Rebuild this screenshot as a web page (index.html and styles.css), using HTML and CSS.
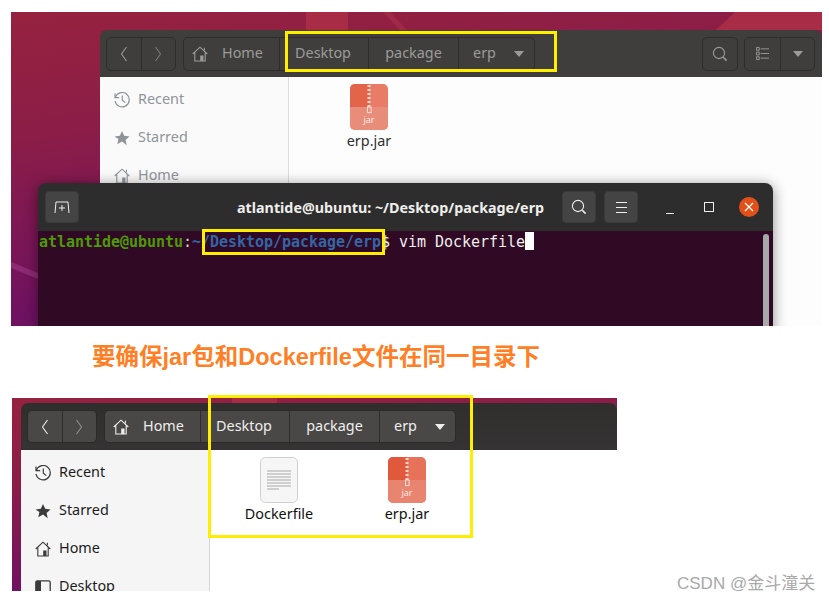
FILE: index.html
```html
<!DOCTYPE html>
<html lang="zh">
<head>
<meta charset="utf-8">
<title>Dockerfile</title>
<link rel="stylesheet" href="styles.css">
</head>
<body>
<svg class="defs" width="0" height="0" aria-hidden="true">
  <symbol id="i-home" viewBox="0 0 16 16"><path d="M.7 8 8 1.2 15.3 8M2.8 6.6V15h10.4V6.6" fill="none" stroke="currentColor" stroke-width="1.1"/><path d="M8.2 9.5h3.3V15H8.2z" fill="currentColor"/><path d="M12.4 1.8v2.6" stroke="currentColor" stroke-width="1.1"/></symbol>
  <symbol id="i-back" viewBox="0 0 16 16"><path d="M10.5 1 5.5 8l5 7" fill="none" stroke="currentColor" stroke-width="1.1"/></symbol>
  <symbol id="i-next" viewBox="0 0 16 16"><path d="m5.5 1 5 7-5 7" fill="none" stroke="currentColor" stroke-width="1.1"/></symbol>
  <symbol id="i-search" viewBox="0 0 16 16"><circle cx="7" cy="7" r="5.6" fill="none" stroke="currentColor" stroke-width="1.1"/><path d="m11 11 3.6 3.6" stroke="currentColor" stroke-width="1.6"/></symbol>
  <symbol id="i-list" viewBox="0 0 14 14"><path d="M5 2h9M5 7h9M5 12h9" stroke="currentColor"/><path d="M.5 .5h3v3h-3zM.5 5.5h3v3h-3zM.5 10.5h3v3h-3z" fill="none" stroke="currentColor"/></symbol>
  <symbol id="i-clock" viewBox="0 0 16 16"><path d="M1.2 5.6A7.2 7.2 0 1 1 1 9" fill="none" stroke="currentColor" stroke-width="1.2"/><path d="M1 1.5v4.2h4.2" fill="none" stroke="currentColor" stroke-width="1.2" stroke-dasharray="0"/><path d="M8.3 3.6v4.6l3 2.4" fill="none" stroke="currentColor" stroke-width="1.2"/></symbol>
  <symbol id="i-star" viewBox="0 0 16 16"><path d="m8 .9 2.2 4.9 5.3.6-3.9 3.6 1.1 5.3L8 11.6l-4.7 2.7 1.1-5.3L.5 6.4l5.3-.6z" fill="currentColor"/></symbol>
  <symbol id="i-desk" viewBox="0 0 16 16"><rect x=".8" y="1.8" width="14.4" height="13" rx="1.5" fill="none" stroke="currentColor" stroke-width="1.3"/><path d="M1 2h5v13H1z" fill="currentColor"/></symbol>
  <symbol id="i-jar" viewBox="0 0 38 46">
    <rect width="38" height="46" rx="5" fill="#e7725a"/>
    <path d="M5 0h14v23H0V5a5 5 0 0 1 5-5z" fill="#e0593c"/>
    <path d="M0 23h38v18a5 5 0 0 1-5 5H5a5 5 0 0 1-5-5z" fill="#e88470"/>
    <path d="M19 1v22" stroke="#f6d5cc" stroke-width="3" stroke-dasharray="2 2"/>
    <rect x="17.5" y="23" width="3.6" height="5.6" fill="none" stroke="#f8ded7"/>
    <text x="19" y="39" class="jar-label">jar</text>
  </symbol>
  <symbol id="i-doc" viewBox="0 0 38 46">
    <rect x=".5" y=".5" width="37" height="45" rx="5" fill="#f6f6f6" stroke="#cfcfcf"/>
    <path d="M7 14h24M7 17h24M7 20h24M7 23h24M7 26h24M7 29h24M7 32h12" stroke="#a8a8a8"/>
  </symbol>
</svg>

<main class="page">
  <section class="shot shot-top">
    <span class="glow glow-a"></span>
    <span class="glow glow-b"></span>
    <span class="glow glow-c"></span>
    <span class="glow glow-d"></span>

    <div class="files files-dim win-top">
      <header class="files-bar">
        <div class="group nav"><button class="seg"><svg class="ico"><use href="#i-back"/></svg></button><button class="seg seg-off"><svg class="ico"><use href="#i-next"/></svg></button></div>
        <div class="group path">
          <span class="seg seg-home"><svg class="ico"><use href="#i-home"/></svg><span>Home</span></span>
          <span class="seg seg-desktop">Desktop</span>
          <span class="seg seg-package">package</span>
          <span class="seg seg-erp">erp<i class="caret"></i></span>
        </div>
        <div class="group tool-search"><span class="seg"><svg class="ico"><use href="#i-search"/></svg></span></div>
        <div class="group tool-view"><span class="seg seg-list"><svg class="ico-s"><use href="#i-list"/></svg></span><span class="seg seg-drop"><i class="caret"></i></span></div>
      </header>
      <div class="files-body">
        <nav class="side">
          <a class="side-item"><svg class="ico"><use href="#i-clock"/></svg>Recent</a>
          <a class="side-item"><svg class="ico"><use href="#i-star"/></svg>Starred</a>
          <a class="side-item"><svg class="ico"><use href="#i-home"/></svg>Home</a>
        </nav>
        <div class="grid">
          <figure class="file file-solo"><svg class="file-ico file-ico-dim"><use href="#i-jar"/></svg><figcaption>erp.jar</figcaption></figure>
        </div>
      </div>
    </div>

    <div class="term">
      <header class="term-bar">
        <span class="tbtn tbtn-new"><svg class="ico" viewBox="0 0 16 14"><path d="M1 13 2 2h12l1 11" fill="none" stroke="currentColor"/><path d="M8 5v6M5 8h6" stroke="currentColor"/></svg></span>
        <span class="term-title">atlantide@ubuntu: ~/Desktop/package/erp</span>
        <span class="tbtn"><svg class="ico"><use href="#i-search"/></svg></span>
        <span class="tbtn tbtn-menu"><i></i><i></i><i></i></span>
        <span class="wbtn wbtn-min"><i></i></span>
        <span class="wbtn wbtn-max"><i></i></span>
        <span class="wbtn wbtn-close"><svg viewBox="0 0 10 10"><path d="m1 1 8 8M9 1 1 9" stroke="#fff" stroke-width="1.2"/></svg></span>
      </header>
      <div class="term-body">
        <div class="term-line"><span class="p-user">atlantide@ubuntu</span><span class="p-colon">:</span><span class="p-path">~/Desktop/package/erp</span><span class="p-cmd">$ vim Dockerfile</span><span class="cursor"></span></div>
        <span class="scroll"></span>
      </div>
    </div>

    <span class="mark mark-path"></span>
    <span class="mark mark-term"></span>
  </section>

  <h1 class="note">要确保jar包和Dockerfile文件在同一目录下</h1>

  <section class="shot shot-bottom">
    <span class="glow glow-e"></span>
    <div class="files files-live win-bottom">
      <header class="files-bar">
        <div class="group nav"><button class="seg"><svg class="ico"><use href="#i-back"/></svg></button><button class="seg seg-off"><svg class="ico"><use href="#i-next"/></svg></button></div>
        <div class="group path">
          <span class="seg seg-home"><svg class="ico"><use href="#i-home"/></svg><span>Home</span></span>
          <span class="seg seg-desktop">Desktop</span>
          <span class="seg seg-package">package</span>
          <span class="seg seg-erp">erp<i class="caret"></i></span>
        </div>
      </header>
      <div class="files-body">
        <nav class="side">
          <a class="side-item"><svg class="ico"><use href="#i-clock"/></svg>Recent</a>
          <a class="side-item"><svg class="ico"><use href="#i-star"/></svg>Starred</a>
          <a class="side-item"><svg class="ico"><use href="#i-home"/></svg>Home</a>
          <a class="side-item"><svg class="ico"><use href="#i-desk"/></svg>Desktop</a>
        </nav>
        <div class="grid">
          <figure class="file file-doc"><svg class="file-ico"><use href="#i-doc"/></svg><figcaption>Dockerfile</figcaption></figure>
          <figure class="file file-jar"><svg class="file-ico"><use href="#i-jar"/></svg><figcaption>erp.jar</figcaption></figure>
        </div>
      </div>
    </div>
  </section>
  <span class="mark mark-bottom"></span>
  <span class="watermark">CSDN @金斗潼关</span>
</main>
</body>
</html>
```

FILE: styles.css
```css
* { box-sizing: border-box; }
html, body { margin: 0; padding: 0; background: #fff; }
body { width: 829px; height: 602px; overflow: hidden; font-family: "Noto Sans", "Noto Sans CJK SC", sans-serif; }
.defs { position: absolute; }
.page { position: relative; width: 829px; height: 602px; padding-top: 12px; }

/* desktop canvases */
.shot { position: relative; overflow: hidden; background: linear-gradient(172deg, #96223f 0%, #8b1d47 30%, #701261 70%, #5c1066 100%); }
.shot-top { margin-left: 11px; width: 811px; height: 314px; }
.shot-bottom { margin-left: 12px; width: 605px; height: 193px; margin-top: 25px; }
.glow { position: absolute; background: #a92c47; }
.glow-a { left: 295px; top: 0; width: 42px; height: 18px; }
.glow-b { left: 372px; top: 0; width: 24px; height: 18px; background: #a02a45; clip-path: polygon(0 0, 30% 0, 100% 100%, 70% 100%); }
.glow-c { left: 705px; top: 0; width: 106px; height: 18px; clip-path: polygon(18% 0, 100% 0, 100% 100%, 0 100%); }
.glow-d { left: 0; top: 250px; width: 27px; height: 17px; background: #8d2a73; clip-path: polygon(0 0, 100% 65%, 100% 100%, 0 35%); }
.glow-e { left: 220px; top: 0; width: 45px; height: 5px; }

/* files window */
.files { position: absolute; display: flex; flex-direction: column; border-radius: 7px 7px 0 0; overflow: hidden; }
.win-top { left: 89px; top: 18px; width: 722px; height: 296px; }
.win-bottom { left: 9px; top: 5px; width: 596px; height: 188px; }
.files-bar { flex: 0 0 47px; display: flex; align-items: center; padding: 0 6px 0 6px; }
.files-dim .files-bar { background: #3f3e3c; color: #9b9b99; }
.files-live .files-bar { background: linear-gradient(#302e2d, #353333); color: #eeeeec; }
.group { height: 34px; display: flex; border: 1px solid #2e2d2c; border-radius: 5px; }
.files-live .group { height: 33px; background: #4a4846; border-color: #2b2a29; }
.seg { display: flex; align-items: center; justify-content: center; height: 100%; padding: 0 0 3px; border: 0; background: none; color: inherit; font: inherit; font-size: 14.4px; border-left: 1px solid #2e2d2c; }
.seg:first-child { border-left: 0; }
.nav { width: 70px; margin-right: 7px; }
.nav .seg { flex: 1; padding-bottom: 0; }
.seg-off { color: #7b7a78; }
.files-live .seg-off { color: #8f8e8c; }
.path { width: 352px; }
.seg-home { width: 95px; justify-content: flex-start; gap: 14px; padding-left: 8px; }
.seg-home .ico { margin-top: 3px; }
.seg-desktop { width: 89px; padding-right: 2px; }
.seg-package { width: 90px; }
.seg-erp { flex: 1; gap: 18px; padding-left: 4px; }
.caret { width: 0; height: 0; margin-top: 3px; border: 5.5px solid transparent; border-top: 6px solid currentColor; border-bottom: 0; }
.tool-search { width: 36px; margin-left: 167px; }
.tool-search .seg { width: 100%; padding-bottom: 0; }
.tool-view { width: 71px; margin-left: 6px; }
.seg-list { width: 35px; padding-bottom: 0; }
.seg-drop { flex: 1; }
.ico { width: 16px; height: 16px; flex: none; }
.ico-s { width: 13px; height: 13px; flex: none; }
.files-body { flex: 1; display: flex; min-height: 0; }
.side { flex: 0 0 189px; padding-top: 3px; border-right: 1px solid #dcdcdc; }
.files-dim .side { background: #fafafa; color: #8f9498; }
.files-live .side { background: #f5f5f5; color: #1c1c1c; border-color: #d6d6d6; }
.files-dim .grid { background: #fdfdfd; }
.files-live .grid { background: #fff; }
.side-item { display: flex; align-items: center; height: 38px; padding-left: 14px; gap: 8px; font-size: 14.4px; line-height: 36px; }
.side-item svg { margin-top: 1px; }
.files-live .side-item svg { color: #3b3b3b; }
.grid { position: relative; flex: 1; display: flex; padding-top: 7px; }
.file { margin: 0; display: flex; flex-direction: column; align-items: center; width: 100px; color: #2f2f2f; font-size: 14.4px; line-height: 20px; }
.files-live .file { color: #111; }
.file-solo { margin-left: 30px; }
.file-doc { margin-left: 19px; }
.file-jar { margin-left: 28px; }
.file-ico { width: 38px; height: 46px; margin-bottom: 1px; }
.file-ico-dim { opacity: .92; }
.jar-label { font: 9px "Noto Sans", sans-serif; fill: #fde9e4; text-anchor: middle; }

/* terminal */
.term { position: absolute; left: 27px; top: 171px; width: 735px; height: 150px; display: flex; flex-direction: column; border-radius: 8px 8px 0 0; overflow: hidden; box-shadow: 0 2px 14px rgba(0,0,0,.45); }
.term-bar { flex: 0 0 48px; display: flex; align-items: center; background: #2d2d2d; color: #eee; padding-left: 7px; }
.tbtn { width: 34px; height: 32px; display: flex; align-items: center; justify-content: center; flex: none; background: #444; border-radius: 4px; margin-right: 8px; border: 1px solid #3a3a3a; }
.tbtn-new { margin-right: 0; }
.term-title { width: 483px; padding-left: 158px; font-weight: 700; font-size: 14.3px; color: #eeeeec; white-space: nowrap; }
.tbtn-menu { flex-direction: column; gap: 4px; margin-right: 0; }
.tbtn-menu i { display: block; width: 11px; height: 1px; background: #eee; }
.wbtn { display: flex; align-items: center; justify-content: center; flex: none; }
.wbtn-min { width: 10px; height: 10px; margin-left: 27px; align-items: flex-end; }
.wbtn-min i { display: block; width: 8px; height: 1.5px; background: #eee; margin-bottom: -2px; }
.wbtn-max { width: 10px; height: 10px; margin-left: 29px; }
.wbtn-max i { display: block; width: 10px; height: 10px; border: 1.5px solid #eee; }
.wbtn-close { width: 20px; height: 20px; margin-left: 25px; border-radius: 50%; background: #e2501a; }
.wbtn-close svg { width: 10px; height: 10px; }
.term-body { position: relative; flex: 1; background: #300a24; }
.term-line { display: flex; height: 20px; padding: 1px 0 0 1px; font: 15px/20px "DejaVu Sans Mono", monospace; letter-spacing: -.03px; white-space: pre; }
.p-user { color: #4e9a06; font-weight: 700; }
.p-colon { color: #d3d7cf; }
.p-path { color: #3465a4; font-weight: 700; }
.p-cmd { color: #eeeeec; }
.cursor { display: block; width: 9px; height: 18px; background: #fff; }
.scroll { position: absolute; right: 4px; top: 3px; width: 6px; bottom: 0; background: #a8a8a8; border-radius: 3px 3px 0 0; }

/* annotations */
.mark { position: absolute; border: 3px solid #ffee00; }
.mark-path { left: 274px; top: 19px; width: 272px; height: 41px; }
.mark-term { left: 191px; top: 217px; width: 183px; height: 26px; }
.mark-bottom { left: 208px; top: 395px; width: 265px; height: 143px; }
.note { margin: 15px 0 0 92px; font: 700 23.5px/32px "Liberation Sans", "Noto Sans CJK SC", sans-serif; color: #ff7f27; white-space: nowrap; }
.watermark { position: absolute; left: 677px; top: 573px; font: 17px/22px "Liberation Sans", "Noto Sans CJK SC", sans-serif; color: #a8a8a8; white-space: nowrap; }
```
